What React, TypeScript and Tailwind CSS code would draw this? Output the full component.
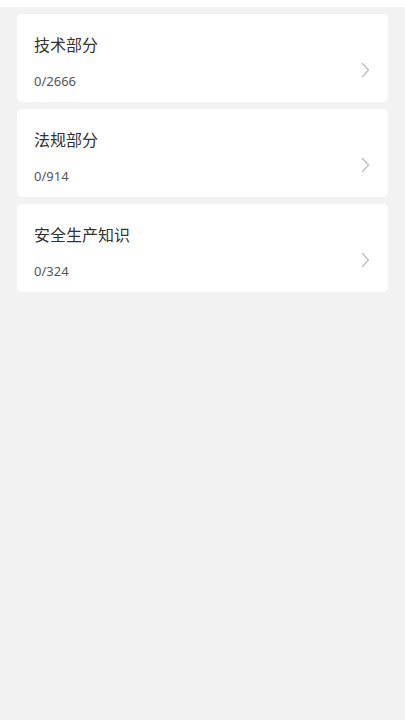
import React from "react";

const items = [
  { title: "技术部分", count: "0/2666" },
  { title: "法规部分", count: "0/914" },
  { title: "安全生产知识", count: "0/324" },
];

export default function App() {
  return (
    <div
      className="w-[405px] h-[720px] bg-[#f2f2f2] flex flex-col"
      style={{ fontFamily: '"Noto Sans", "Noto Sans CJK SC", sans-serif' }}
    >
      <div className="h-[7px] bg-white shrink-0" />
      <div className="flex flex-col gap-[7px] px-[17px] pt-[7px]">
        {items.map((it) => (
          <div
            key={it.title}
            className="h-[88px] bg-white rounded-[5px] flex items-start pt-[20px] pl-[17px] pr-[18px]"
          >
            <div className="flex-1 flex flex-col">
              <div className="text-[16px] leading-[22px] text-[#333333]">{it.title}</div>
              <div className="text-[13px] leading-[18px] text-[#555555] mt-[16px]">{it.count}</div>
            </div>
            <svg
              width="9"
              height="16"
              viewBox="0 0 9 16"
              className="mt-[28px]"
              fill="none"
            >
              <path d="M1.5 1.5 L7.5 8 L1.5 14.5" stroke="#bdbdbd" strokeWidth="1.3" strokeLinecap="round" strokeLinejoin="round" />
            </svg>
          </div>
        ))}
      </div>
    </div>
  );
}
